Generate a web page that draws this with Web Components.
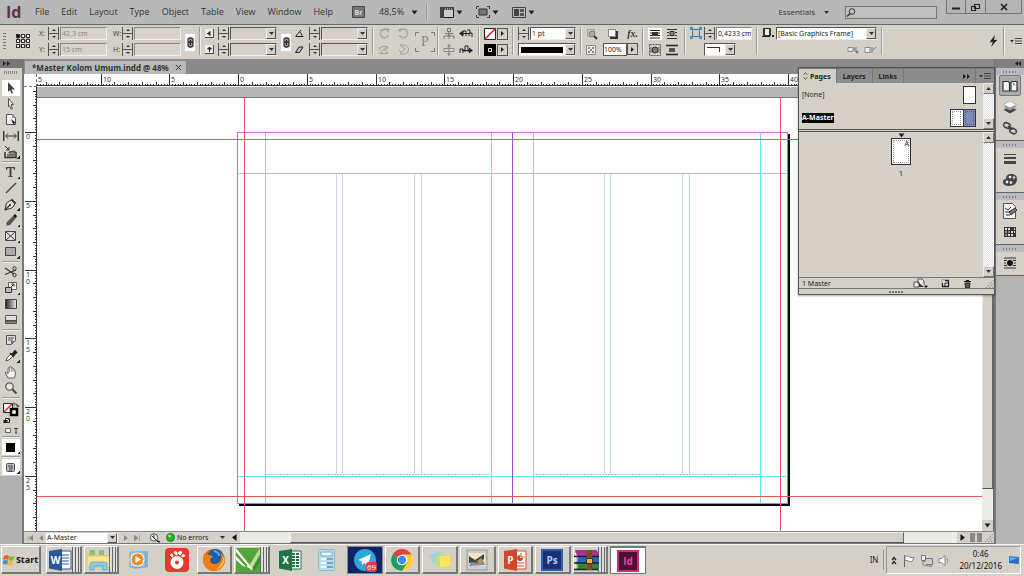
<!DOCTYPE html>
<html lang="en">
<head>
<meta charset="utf-8">
<title>Master Kolom Umum.indd</title>
<style>
html,body{height:100%;margin:0}
body{font-family:"Noto Sans","Open Sans",sans-serif;font-size:7px;color:#222;overflow:hidden;background:#b8b8b8}
</style>
</head>
<body>
<design-app></design-app>
<script>
const RESET = `
*{box-sizing:border-box}
button,input,select{font:inherit;color:inherit;margin:0;padding:0;border:0;border-radius:0;background:none;min-width:0;outline-offset:-1px}
button{display:flex;align-items:center;justify-content:center}
select{appearance:none}
`;
function define(tag, css, markup, ready) {
  customElements.define(tag, class extends HTMLElement {
    connectedCallback() {
      if (this.shadowRoot) return;
      const root = this.attachShadow({ mode: "open" });
      const html = typeof markup === "function" ? markup(this) : markup;
      root.innerHTML = `<style>${RESET}${css}</style>${html}`;
      if (ready) ready(root, this);
    }
  });
}

/* name: [width, height, drawing] */
const ICONS = {
  refpoint: [16, 16, [1, 6, 11].map(y => [1, 6, 11].map(x => `<rect x="${x + .5}" y="${y + .5}" width="3" height="3" fill="${x + y === 2 ? "#111" : "#eee"}" stroke="#333"/>`).join("")).join("") + '<path d="M5 3h1M10 3h1M5 8h1M10 8h1M5 13h1M10 13h1M3 5v1M8 5v1M13 5v1" stroke="#333"/>'],
  chain: [10, 17, '<path d="M0 0h10v17H0z" fill="#fff"/><rect x="3" y="4" width="5" height="5" rx="2" fill="#999" stroke="#333" stroke-width="1.3"/><rect x="3" y="8" width="5" height="5" rx="2" fill="#999" stroke="#333" stroke-width="1.3"/><path d="M5.500 6v5" stroke="#222"/>'],
  scalex: [9, 9, '<path d="M0 0h9v9H0z" fill="#eee"/><path d="M0 8.500h8.500V0" fill="none" stroke="#444"/><path d="M2 4.500h3M5 2.500v4l-2-2z" fill="#222" stroke="#222"/>'],
  scaley: [9, 9, '<path d="M0 0h9v9H0z" fill="#eee"/><path d="M0 8.500h8.500V0" fill="none" stroke="#444"/><path d="M4.500 3v4M2.500 4h4l-2-2z" fill="#222" stroke="#222"/>'],
  angle: [9, 9, '<path d="M.5 7.500h8M1 7l5-6M5 3q2 2 2 4" fill="none" stroke="#222"/>'],
  shear: [9, 9, '<path d="M.5 7.500h4L8 2H4z" fill="#bbb" stroke="#222"/>'],
  rotr: [11, 11, '<path d="M9.500 7A4.200 4.200 0 1 1 8 2" fill="none" stroke="#a8a49c" stroke-width="1.500"/><path d="M7 0l4 1-2 4z" fill="#a8a49c"/>'],
  rotl: [11, 11, '<path d="M1.500 7A4.200 4.200 0 1 0 3 2" fill="none" stroke="#a8a49c" stroke-width="1.500"/><path d="M4 0L0 1l2 4z" fill="#a8a49c"/>'],
  fliph: [12, 11, '<path d="M1 6a5 4 0 0 1 9-2M2 9.500h8L6 5zM9 2v3H6" fill="none" stroke="#a09c94"/>'],
  flipv: [11, 11, '<path d="M2 1h4a4 4 0 0 1 0 9H2l5-5zM1 6l2 2" fill="none" stroke="#a09c94"/>'],
  brackets: [20, 20, '<path d="M4 .5H.5V4M16 .5h3.500V4M4 19.500H.5V16M16 19.500h3.500V16" fill="none" stroke="#777"/>'],
  selcont: [12, 12, '<path d="M4.500.5h3v3h-3zM1 11V8h10v3M6 4v4M2 5.500h8M6 8v3" fill="none" stroke="#777"/><path d="M4 8l2-2 2 2z" fill="#777"/>'],
  selobj: [12, 12, '<path d="M1 4.500h10v3H1zM6 0v12" fill="none" stroke="#888"/><path d="M4 9h4l-2 3zM4 3h4L6 0z" fill="#888"/>'],
  prevobj: [14, 11, '<path d="M1 5.500h9M4 8V3h3v5M8 2h3v4M10 8V5h3v4" fill="none" stroke="#222"/><path d="M0 5.500l4-3v6z" fill="#222"/>'],
  nextobj: [14, 11, '<path d="M3 6.500h9M1 9V5h3v4M6 8V2h3v6" fill="none" stroke="#222"/><path d="M14 6.500l-4-3v6z" fill="#222"/>'],
  nonefill: [12, 12, '<path d="M.5.5h11v11H.5z" fill="#fff" stroke="#222"/><path d="M1 11L11 1" stroke="#d22" stroke-width="1.600"/>'],
  blackstroke: [12, 12, '<path d="M0 0h12v12H0z" fill="#000"/><path d="M4.500 4.500h3v3h-3z" fill="#000" stroke="#eee"/>'],
  play: [5, 5, '<path d="M1 0l3 2.500L1 5z" fill="#222"/>'],
  back: [5, 7, '<path d="M4.500 0v7L0 3.500z" fill="#111"/>'],
  fwd: [5, 7, '<path d="M.5 0v7L5 3.500z" fill="#111"/>'],
  first: [6, 6, '<path d="M1 0v6M6 0v6L2 3z" fill="#888" stroke="#888" stroke-width=".6"/>'],
  prev: [4, 6, '<path d="M4 0v6L0 3z" fill="#888"/>'],
  next: [4, 6, '<path d="M0 0v6l4-3z" fill="#888"/>'],
  last: [6, 6, '<path d="M5.500 0v6M0 0v6l4-3z" fill="#888" stroke="#888" stroke-width=".6"/>'],
  caret: [7, 5, '<path d="M.5.5h6L3.500 4.500z" fill="#222"/>'],
  smallcaret: [5, 3, '<path d="M0 0h5L2.500 3z" fill="#333"/>'],
  effects: [12, 12, '<path d="M1.500 1.500h7v7h-7z" fill="none" stroke="#777" stroke-dasharray="1 1"/><circle cx="6" cy="6" r="3" fill="#aaa" stroke="#777"/><path d="M8 8l3 3" stroke="#333" stroke-width="2"/>'],
  shadow: [10, 10, '<path d="M2 2h8v8H2z" fill="#333"/><path d="M.5.5h7v7h-7z" fill="#f5f5f5" stroke="#888"/>'],
  opacity: [10, 10, '<path d="M.5.5h9v9h-9z" fill="#eee" stroke="#888"/><path d="M2 2h2v2H2zM6 2h2v2H6zM4 4h2v2H4zM2 6h2v2H2zM6 6h2v2H6z" fill="#888"/>'],
  nowrap: [14, 12, '<path d="M0 0h14v12H0z" fill="#fff"/><path d="M2 2.500h10M2 5h10M2 7.500h10M2 10h10" stroke="#222"/><path d="M4 4h6v4H4z" fill="#333"/>'],
  wrapbox: [12, 12, '<path d="M1 1.500h10M1 4.500h2M1 7.500h2M9 4.500h2M9 7.500h2M1 10.500h10" stroke="#333"/><path d="M4 3.500h4v4H4z" fill="#888" stroke="#333"/>'],
  wrapshape: [12, 12, '<path d="M.5.5h11v11H.5z" fill="none" stroke="#555" stroke-dasharray="2 1"/><circle cx="6" cy="6" r="3" fill="#777" stroke="#333"/><path d="M1 4h2M1 6h2M1 8h2M9 4h2M9 6h2M9 8h2" stroke="#555"/>'],
  wrapjump: [12, 12, '<path d="M0 1.500h12M0 10.500h12" stroke="#222" stroke-width="1.500"/><path d="M3 4h6v4H3z" fill="#555"/>'],
  corner: [12, 12, '<path d="M2.500 2.500h7v7h-7z" fill="#ccc" stroke="#666"/><path d="M0 0h3v3H0zM9 0h3v3H9zM0 9h3v3H0zM9 9h3v3H9z" fill="#3a9ad9"/>'],
  objstyle: [12, 11, '<path d="M1 1h8v8H1z" fill="#333"/><path d="M3 2h4v6H3z" fill="#eee"/><path d="M0 9.500h8" stroke="#222"/><path d="M10 8h2v2h-2z" fill="#222"/>'],
  clear1: [12, 8, '<path d="M1 1.500h5v4H1z" fill="#eee" stroke="#888"/><path d="M7 5V2h3M9 3v3" stroke="#777" fill="none"/><path d="M8 5h4l-2 3z" fill="#777"/>'],
  clear2: [13, 8, '<path d="M1 1.500h5v5H1z" fill="#eee" stroke="#888"/><path d="M8 1v6M9 4l3-3" stroke="#777"/>'],
  bolt: [9, 12, '<path d="M6 0L1 6.500h3L2 12l6-7H5z" fill="#222"/><path d="M1 7l7-2" stroke="#222"/>'],
  menu: [12, 8, '<path d="M0 3h4L2 5.500z" fill="#333"/><path d="M5 1.500h7M5 4h7M5 6.500h7" stroke="#444"/>'],
  bridge: [13, 12, '<path d="M.5.5h12v11H.5z" fill="#777" stroke="#444"/>'],
  viewopts: [14, 11, '<path d="M.5.5h13v10H.5z" fill="#ccc" stroke="#222"/><path d="M0 0h14v3H0zM0 0h4v11H0z" fill="#444"/><path d="M5 2h8" stroke="#ddd" stroke-dasharray="1 1"/>'],
  screenmode: [14, 12, '<path d="M3 3h8v6H3z" fill="#777" stroke="#333"/><path d="M.5 3V.5H3M11 .5h2.500V3M.5 9v2.500H3M13.500 9v2.500H11" fill="none" stroke="#333"/>'],
  arrange: [14, 11, '<path d="M.5.5h13v10H.5z" fill="#bbb" stroke="#444"/><path d="M2 2h5v7H2z" fill="#444"/><path d="M8 2h4v3H8zM8 6h4v3H8z" fill="#555"/>'],
  search: [10, 9, '<circle cx="6" cy="3.500" r="2.800" fill="none" stroke="#333"/><path d="M4 5.500L1 8.500" stroke="#333" stroke-width="1.500"/>'],
  min: [8, 8, '<path d="M0 5.500h8" stroke="#222" stroke-width="2"/>'],
  restore: [9, 8, '<path d="M3.500 1.500h5v4h-5zM.5 3.500h4v4h-4z" fill="#b8b8b8" stroke="#222" stroke-width="1.200"/>'],
  close: [8, 8, '<path d="M1 1l6 6M7 1L1 7" stroke="#222" stroke-width="1.700"/>'],
  tabx: [5, 5, '<path d="M0 0l5 5M5 0L0 5" stroke="#333"/>'],
  dbl: [7, 5, '<path d="M0 0l3 2.500L0 5zM4 0l3 2.500L4 5z" fill="#222"/>'],
  dblL: [6, 5, '<path d="M3 0v5L0 2.500zM6 0v5L3 2.500z" fill="#222"/>'],
  updown: [5, 8, '<path d="M.5 3l2-2.500 2 2.500M.5 5l2 2.500 2-2.500" fill="none" stroke="#444" stroke-width=".8"/>'],
  /* toolbox */
  select: [14, 14, '<path d="M4 1l7 7.500H7.500L9 12l-1.500.8L6 9l-2 2z" fill="#444"/>'],
  direct: [14, 14, '<path d="M4.500 1.500l5 6H7l1.500 4-1.500.6L5.500 8.500l-1 1z" fill="#eee" stroke="#444" stroke-width=".9"/>'],
  page: [14, 14, '<path d="M2.500 1.500h6l3 3v7h-9z" fill="#eee" stroke="#555"/><path d="M8 1v4h4z" fill="#999"/><path d="M7 6l5 4-2 .3 1 2.200-2-1.500z" fill="#222"/>'],
  gap: [16, 12, '<path d="M.7 1v10M15.300 1v10" stroke="#333" stroke-width="1.400"/><path d="M3 6h10M5 3.500L2.500 6 5 8.500M11 3.500L13.500 6 11 8.500" fill="none" stroke="#333"/>'],
  collect: [14, 14, '<path d="M1 7v5.500h11V7" fill="none" stroke="#333" stroke-width="1.500"/><path d="M3 9h8v3H3z" fill="#777"/><path d="M5 7l6-1v2H5zM1 1l4 4M5 2v3H2" fill="none" stroke="#333"/>'],
  type: [14, 14, '<path d="M2 5V2h9v3h-.8q-.3-2-2-2H7.500v8l1.500.5v.5H4v-.5l1.500-.5V3H4.800Q3 3 2.800 5z" fill="#444"/>'],
  line: [14, 14, '<path d="M2 12L12 2" stroke="#444" stroke-width="1.400"/>'],
  pen: [14, 14, '<path d="M1 13l1.500-7L7 3l4 4-3 4z" fill="#ddd" stroke="#333"/><path d="M1 13l5-5M7.500 2l4.500 4.500" stroke="#333" stroke-width="1.200"/><circle cx="6" cy="8" r="1" fill="#333"/>'],
  pencil: [14, 14, '<path d="M1 13l2-4 6-6 3 2-6 7z" fill="#555"/><path d="M9 3l2-2 2 2-1 2z" fill="#111"/><path d="M1 13l1-2 1 1z" fill="#fff"/>'],
  frame: [14, 14, '<path d="M1.500 2.500h10v9h-10zM2 3l9 8M11 3l-9 8" fill="#ddd" stroke="#444"/>'],
  rect: [14, 14, '<path d="M1.500 2.500h10v8h-10z" fill="#aaa" stroke="#444"/>'],
  scissors: [14, 14, '<path d="M1 3l9 6M1 9.500l11-4.500" stroke="#333" stroke-width="1.200"/><circle cx="10.500" cy="3.500" r="1.700" fill="none" stroke="#333"/><circle cx="10.500" cy="10" r="1.700" fill="none" stroke="#333"/>'],
  transform: [14, 14, '<path d="M4.500 1.500h8v7h-8z" fill="#eee" stroke="#666"/><path d="M1.500 6.500h6v5h-6z" fill="#bbb" stroke="#333"/><path d="M6 7l4-4M7.500 3H10v2.500" stroke="#333" fill="none"/>'],
  gradient: [14, 14, '<defs><linearGradient id="g"><stop stop-color="#222"/><stop offset="1" stop-color="#eee"/></linearGradient></defs><path d="M1.500 2.500h11v9h-11z" fill="url(#g)" stroke="#444"/>'],
  feather: [14, 14, '<defs><linearGradient id="g" x2="0" y2="1"><stop stop-color="#ddd"/><stop offset=".5" stop-color="#ddd"/><stop offset=".6" stop-color="#444"/><stop offset="1" stop-color="#999"/></linearGradient></defs><path d="M1.500 2.500h11v8h-11z" fill="url(#g)" stroke="#555"/>'],
  note: [14, 14, '<path d="M2.500 2.500h9v5l-4 4h-5z" fill="#ddd" stroke="#555"/><path d="M4 5h6M4 7h5" stroke="#555"/><path d="M7 11.500V8h4z" fill="#777"/>'],
  dropper: [14, 14, '<path d="M2 12l1-3 4-4 2 2-4 4z" fill="#eee" stroke="#444" stroke-width=".9"/><path d="M6 4l4 4M8 5.500l3-3.500 1.500 1.500-3 3z" stroke="#222" stroke-width="1.600"/>'],
  hand: [14, 14, '<path d="M4 13L1 7.500l1-.7L4 9V3.500q.8-1 1.500 0V2q.9-1 1.800 0v1q.9-.8 1.700.2V4q1-.6 1.600.5L11.500 8l-1 5z" fill="#f4f4f4" stroke="#555" stroke-width=".9"/><path d="M5.500 3.500V7M7.300 3v4M9 4v3" stroke="#777" stroke-width=".8"/>'],
  zoom: [14, 14, '<circle cx="5.500" cy="5.500" r="3.700" fill="#e4e4e4" stroke="#555" stroke-width="1.200"/><path d="M8.500 8.500l4 4" stroke="#444" stroke-width="2"/>'],
  fillstroke: [18, 25, '<path d="M1.500 2.500h9v9h-9z" fill="#fff" stroke="#222"/><path d="M2 11l8-8" stroke="#d22" stroke-width="1.500"/><path d="M9 8h6v6H9z" fill="#fff" stroke="#000" stroke-width="2.500"/><path d="M13 3q3 0 3 3M12 1.500v3M14.500 5h3" fill="none" stroke="#333"/><path d="M3.500 17.500h4v4h-4z" fill="#fff" stroke="#222"/><path d="M1.500 19h4v3h-4z" fill="#111"/><path d="M4 21l3-3" stroke="#d22"/>'],
  fmt: [16, 7, '<path d="M2.500 1.500h5v4h-5z" fill="#eee" stroke="#666"/><path d="M11 1.500h4M13 1.500V6M12 6h2" stroke="#444"/>'],
  black: [14, 14, '<path d="M2 3h9v9H2z" fill="#000"/>'],
  preview: [14, 14, '<rect x="2.500" y="3.500" width="8" height="8" rx="1" fill="#bbb" stroke="#555"/><path d="M4 6h5M5 8h4M5 10h3" stroke="#444"/>'],
  /* docked panels */
  dpages: [16, 14, '<path d="M1 2.500h5l1.500 1V12H1zM9 12V3.500L10.500 2.500H15V12z" fill="#f4f4f4" stroke="#333" stroke-width="1.200"/><path d="M11 3v4l2-1.500L15 7" fill="#999"/>'],
  dlayers: [16, 14, '<path d="M8 6.500l6.500 3.300L8 13.500 1.500 9.800z" fill="#444"/><path d="M8 4l6.500 3.300L8 10.500 1.500 7.300z" fill="#999"/><path d="M8 1l6.500 3.500L8 8 1.500 4.500z" fill="#fff" stroke="#888" stroke-width=".6"/>'],
  dlinks: [16, 14, '<ellipse cx="5" cy="4.500" rx="3.500" ry="2.500" transform="rotate(25 5 4.500)" fill="none" stroke="#444" stroke-width="1.500"/><ellipse cx="11" cy="10" rx="3.500" ry="2.500" transform="rotate(25 11 10)" fill="none" stroke="#444" stroke-width="1.500"/><path d="M6 5l4 4" stroke="#333" stroke-width="1.600"/>'],
  dstroke: [16, 14, '<path d="M2 2.500h12" stroke="#444"/><path d="M2 6h12" stroke="#444" stroke-width="2"/><path d="M2 10.500h12" stroke="#444" stroke-width="3"/>'],
  dcolor: [16, 14, '<path d="M9 1q6 0 6 5 0 7-8 7-6 0-6-4 0-3 3-3 0-5 5-5z" fill="#444"/><circle cx="8" cy="4" r="1.300" fill="#fff"/><circle cx="12" cy="4.500" r="1.300" fill="#ccc"/><circle cx="5" cy="9" r="1.400" fill="#eee"/><circle cx="9" cy="9.500" r="1.400" fill="#ddd"/>'],
  dstyle: [16, 16, '<path d="M1.500.5h9l3 3v12h-12z" fill="#f4f4f4" stroke="#555"/><path d="M3 5l3 2 3-3M3 9h5M4 12h4" stroke="#333" fill="none"/><path d="M7 9l6-4 2 2-6 5z" fill="#777" stroke="#333"/>'],
  dswatch: [16, 14, '<path d="M2 2h12v10H2z" fill="#333"/><path d="M3 3h2v2H3zM6 3h2v2H6zM12 3h1v2h-1zM9 6h2v2H9zM12 6h1v2h-1zM6 9h2v2H6zM9 9h2v2H9z" fill="#ddd"/><path d="M3 6h2v2H3zM6 6h2v2H6zM3 9h2v2H3z" fill="#888"/>'],
  dwrap: [16, 14, '<path d="M2 2h12M2 4.500h3M2 7h2M2 9.500h3M11 4.500h3M12 7h2M11 9.500h3M2 12h12" stroke="#333"/><circle cx="8" cy="7" r="3" fill="#111"/>'],
  newspread: [15, 10, '<path d="M1 9V4h5v5zM5 6V1h4l2 2v4" fill="#eee" stroke="#555"/><path d="M6 5l5 4H6z" fill="#333"/><path d="M12 8h2v1h-2z" fill="#111" stroke="#111"/>'],
  newpage: [9, 9, '<path d="M1.500 1.500h6v6h-6z" fill="#eee" stroke="#222" stroke-width="1.300"/><path d="M1 1h3v3H1z" fill="#d4d0c8"/><path d="M4 8V4h3" stroke="#222" fill="none"/>'],
  trash: [9, 9, '<path d="M1 2.500h7M3 1.500h3" stroke="#111"/><path d="M2 4h5l-.6 5H2.600z" fill="#555" stroke="#222"/>'],
  grip: [9, 9, '<path d="M1 9l8-8M4 9l5-5M7 9l2-2" stroke="#888" stroke-dasharray="1.500 1"/>'],
  preflight: [12, 10, '<circle cx="5" cy="4.500" r="3.700" fill="#eee" stroke="#555"/><path d="M3 3l5 5M5 2v3" stroke="#333"/><path d="M8 8l3 1" stroke="#222" stroke-width="1.400"/>'],
  green: [9, 9, '<circle cx="4.500" cy="4.500" r="4" fill="#25b51d" stroke="#2a7f22"/><circle cx="3.500" cy="3" r="1.500" fill="#8fe58a"/>'],
  /* taskbar */
  winflag: [12, 12, '<path d="M1 2q3-2 5 0L5 6Q3 4.500 0 6z" fill="#e8602c"/><path d="M6.500 2q2.500 1.500 5 0l-1 4q-2.500 1.500-5 0z" fill="#7db928"/><path d="M0 6.700q3-1.500 5 0l-1 4q-2-1.500-5 0z" fill="#3a8fd8"/><path d="M5.300 7q2.500 1.500 5 0l-1 4q-2.500 1.500-5 0z" fill="#f6bd25"/>'],
  word: [24, 24, '<path d="M12 3h11v18H12z" fill="#fff" stroke="#2b579a"/><path d="M14 7h7M14 10h7M14 13h7M14 16h7" stroke="#2b579a"/><path d="M1 3l13-2v22L1 20.500z" fill="#2b579a"/><text x="7.500" y="15.500" text-anchor="middle" font-size="10" font-weight="700" fill="#fff">W</text>'],
  folder: [24, 24, '<path d="M1 5h8l1 2h13v13H1z" fill="#ecc766"/><path d="M4 2h5v5H4zM13 2h5v5h-5z" fill="#8fbf70"/><path d="M1 8h22v11H1z" fill="#fbe49a" stroke="#dcb95c" stroke-width=".7"/><path d="M4 22v-6q0-2 2-2h13q2 0 2 2v6h-4v-4H8v4z" fill="#8ccbe6" stroke="#4e9fc6" stroke-width=".7"/>'],
  player: [22, 22, '<path d="M5 3l15-1v16L6 20z" fill="#7cb7d8"/><path d="M2 3h15v15H2z" fill="#a5d1e8" stroke="#6ea8c6"/><circle cx="9.500" cy="10.500" r="6.500" fill="#f28a1c" stroke="#fff"/><path d="M7.500 7v7l5.500-3.500z" fill="#fff"/>'],
  gom: [24, 24, '<rect width="24" height="24" rx="4" fill="#e63a2b"/><circle cx="12" cy="14.500" r="6.500" fill="#fff"/><circle cx="12" cy="14.500" r="2" fill="#e63a2b"/><path d="M5 7q1-2 3 0l-1 2zM9 4q2-2 3 1v2l-2-1zM13 5q1-3 4-1l-2 3zM17 7q3-1 3 1l-3 1z" fill="#fff" stroke="#fff"/>'],
  firefox: [24, 24, '<circle cx="12" cy="12" r="11" fill="#e66000"/><circle cx="13.500" cy="9" r="8" fill="#1c5fa8"/><path d="M12 3q5 1 5 5" stroke="#57a8dc" stroke-width="2" fill="none"/><path d="M2 5q2 2 5 2 3 0 4 2l-3 2q0 5 5 5 4 0 6-4 1-5-1-8 5 4 5 9-1 8-10 10Q3 22 1 13q0-5 1-8z" fill="#f07f13"/><path d="M22 8q2 11-9 14 7-4 9-14z" fill="#ffcb2d"/>'],
  corel: [24, 24, '<path d="M0 0h24v24H0z" fill="#53a536"/><path d="M0 0l16 20-3-1L0 4M0 8l10 11-3-1L0 12" fill="#fff"/><path d="M24 0L13 18l2 5L24 6z" fill="#b9df9b"/><path d="M24 8l-7 11 1 4 6-9z" fill="#3e8d27"/><path d="M12 15l5 7-6-3z" fill="#fff"/>'],
  excel: [24, 24, '<path d="M12 3h11v18H12z" fill="#fff" stroke="#217346"/><path d="M14 6h3M14 9h3M14 12h3M14 15h3M14 18h3M18 6h3M18 9h3M18 12h3M18 15h3M18 18h3" stroke="#217346" stroke-width="2"/><path d="M1 3l13-2v22L1 20.500z" fill="#217346"/><text x="7.500" y="15.500" text-anchor="middle" font-size="10" font-weight="700" fill="#fff">X</text>'],
  calc: [20, 24, '<rect x="1.500" y="1.500" width="16" height="21" rx="1" fill="#b8dbee" stroke="#88b8d2"/><path d="M4 4h11v4H4z" fill="#e9f6fd" stroke="#79a9c4"/><path d="M4 10h5v2H4zM4 14h5v2H4zM4 18h5v2H4z" fill="#fff"/><path d="M10 10h6v2h-6zM10 14h6v2h-6zM10 18h6v2h-6z" fill="#6aa7cd"/>'],
  telegram: [28, 24, '<circle cx="14" cy="12" r="11" fill="#2fa5dc"/><path d="M7 12l13-6-3 12-4-3-2 2-.5-4z" fill="#fff"/><rect x="15" y="14" width="11" height="10" rx="3" fill="#e03c3c"/><text x="20.500" y="22" text-anchor="middle" font-size="8" fill="#fff">69</text>'],
  chrome: [24, 24, '<circle cx="12" cy="12" r="11" fill="#fff"/><path d="M12 12L2.500 6.500A11 11 0 0 1 21.500 6.500z" fill="#dc4437"/><path d="M12 12V6.500h9.500A11 11 0 0 1 12 23z" fill="#fc3"/><path d="M12 12l5 3-5 8A11 11 0 0 1 2.500 6.500z" fill="#1a9f5b"/><circle cx="12" cy="12" r="5.300" fill="#fff"/><circle cx="12" cy="12" r="4.200" fill="#4688f1"/>'],
  notes: [24, 22, '<path d="M1 6l11-4 3 9-10 4z" fill="#9ad5e5"/><path d="M5 11l8-8 7 7-9 8z" fill="#b5df8d"/><path d="M11 7l11-1 1 11-11 2z" fill="#fbe666" stroke="#e6cc4b" stroke-width=".5"/>'],
  photo: [22, 22, '<rect x="1" y="1" width="20" height="20" fill="#ccc" stroke="#999"/><path d="M3 4h16v13H3z" fill="#f4e6c4"/><path d="M3 7l6 4 9-6v5l-6 4H3z" fill="#444"/><path d="M5 13l8 1 4-3 2 5-16 1z" fill="#7a8ea6"/><path d="M11 12l4-3 2 3-4 3z" fill="#d28b3f"/>'],
  ppt: [24, 24, '<path d="M12 3h11v18H12z" fill="#fff" stroke="#d24726"/><path d="M14 15h7M14 18h7" stroke="#d24726"/><path d="M17 7a3 3 0 1 0 3 3h-3z" fill="#d24726"/><path d="M18 5v4h3.500" fill="none" stroke="#d24726"/><path d="M1 3l13-2v22L1 20.500z" fill="#d24726"/><text x="7.500" y="15.500" text-anchor="middle" font-size="10" font-weight="700" fill="#fff">P</text>'],
  ps: [22, 22, '<path d="M1 1h20v20H1z" fill="#1c2f73" stroke="#2f5db5" stroke-width="2"/><text x="11" y="14.500" text-anchor="middle" font-size="10" font-weight="700" fill="#a9d3f5">Ps</text>'],
  rar: [26, 22, '<path d="M1 1h21l3 3v4H3z" fill="#a3358c"/><path d="M1 4l2 4v-2z" fill="#eee"/><path d="M2 8h23v6H3z" fill="#2e62c0"/><path d="M2 14h23v7H3z" fill="#2c8a3a"/><path d="M0 7.500h25M0 14h25M0 20.500h24" stroke="#222" stroke-width="1.500"/><path d="M0 9h4M0 11h4M0 16h4M0 18h4" stroke="#eee"/><path d="M13 1h5v20h-5z" fill="#7d4a1a"/><path d="M12.500 9.500h6v5h-6z" fill="#d9b44a" stroke="#4b2c0c"/>'],
  indd: [22, 22, '<path d="M1 1h20v20H1z" fill="#4b0f32" stroke="#c3307d" stroke-width="2"/><text x="11" y="14.500" text-anchor="middle" font-size="10" font-weight="700" fill="#e64a9a">Id</text>'],
  chev: [6, 9, '<path d="M1 4l2-2.500L5 4M1 8l2-2.500L5 8" fill="none" stroke="#222" stroke-width="1.300"/>'],
  flag: [13, 13, '<path d="M2.500 1v12" stroke="#666"/><path d="M3 2h4l1 1.500h4l-2 4H6.500L6 6.500H3z" fill="#fff" stroke="#888"/>'],
  net: [13, 13, '<path d="M4.500 4.500h8v6h-8z" fill="#ccc" stroke="#777"/><path d="M1.500 1.500h4v5h-4zM3 7v4h4M6 12h6" fill="#eee" stroke="#777"/>'],
  vol: [12, 13, '<path d="M1 4.500h2.500L7 1.500v10L3.500 8.500H1z" fill="#fff" stroke="#888"/><path d="M9 4q1.800 2.500 0 5" fill="none" stroke="#999"/>'],
  monitor: [12, 12, '<path d="M1 2l10 1v7L1 9z" fill="#2b6fc9"/><path d="M2 3l8 1-8 3z" fill="#6ea8e8"/>'],
};
define("ui-icon", `:host{display:inline-flex;flex:none}svg{display:block;font-family:"Open Sans",sans-serif}`, el => {
  const [w, h, d] = ICONS[el.getAttribute("name")];
  return `<svg width="${w}" height="${h}" viewBox="0 0 ${w} ${h}" aria-hidden="true">${d}</svg>`;
});
const icon = n => `<ui-icon name="${n}"></ui-icon>`;
const button = (n, label, cls = "") => `<button class="${cls}" aria-label="${label}">${icon(n)}</button>`;

define("combo-box", `
:host{display:grid;height:13px;min-width:0}
select,span{grid-area:1/1}
select{width:100%;height:13px;padding-left:1px;background:#fff;border:1px solid #555;border-right-color:#ccc;border-bottom-color:#eee;white-space:nowrap}
span{justify-self:end;align-self:center;width:10px;height:11px;margin-right:1px;background:#d4d0c8;border:1px solid #eee;border-right-color:#555;border-bottom-color:#555;display:grid;place-items:center;pointer-events:none}
:host([muted]) select{background:#d6cec8}
:host([plain]){height:10px}
:host([plain]) select{border:0;height:10px}
:host([plain]) span{height:10px}
`, el => `<select aria-label="${el.getAttribute("label")}"><option>${el.getAttribute("value") || ""}</option></select><span>${icon("smallcaret")}</span>`);

define("spin-buttons", `
:host{display:grid;grid-template-rows:6px 6px;gap:1px;width:11px;background:#555;border-left:1px solid #555;border-right:1px solid #555}
button{background:#d4d0c8}
i{border:2px solid transparent;border-top:0;border-bottom:2px solid #333}
button+button i{border-bottom:0;border-top:2px solid #333}
`, `<button aria-label="Increase"><i></i></button><button aria-label="Decrease"><i></i></button>`);

define("spin-field", `
:host{display:grid;grid-template-columns:var(--label,11px) 12px 1fr;height:13px;align-items:center}
:host([bare]){grid-template-columns:12px 1fr}
input{width:100%;height:13px;padding-left:1px;background:#d8d2ca;border:1px solid #888;border-right-color:#eee;border-bottom-color:#eee;color:#888}
:host([active]) input{background:#fff;color:#222}
label{color:#444;display:flex;padding-left:2px}
:host([icon]) label{padding:0}
`, el => {
  const l = el.getAttribute("label"), ic = el.getAttribute("icon"), v = el.getAttribute("value") || "";
  const lab = el.hasAttribute("bare") ? "" : `<label for="f">${ic ? icon(ic) : l}</label>`;
  const box = el.hasAttribute("combo") ? `<combo-box ${el.hasAttribute("active") ? "" : "muted"} label="${l}" value="${v}"></combo-box>` : `<input id="f" aria-label="${l}" value="${v}">`;
  return lab + `<spin-buttons></spin-buttons>` + box;
});

define("menu-bar", `
:host{display:flex;align-items:center;height:24px;background:#b8b8b8;font-family:"Open Sans",sans-serif;font-size:9px;color:#333}
.logo{font-size:16px;font-weight:700;color:#5d2f4d;width:29px;padding-left:6px;line-height:22px}
nav{display:flex;gap:12px;padding-left:6px}
nav a{color:inherit;text-decoration:none;line-height:24px}
.tools{display:flex;align-items:center;margin-left:19px}
.bridge{display:grid}
.bridge>*{grid-area:1/1;place-self:center;color:#ddd;font-size:7px;font-weight:700}
.zoom{gap:7px;margin-left:14px;line-height:22px}
.sep{width:1px;height:16px;background:#999;border-right:1px solid #ccc;box-sizing:content-box;margin:0 12px 0 8px}
.t{gap:2px;margin-right:13px}
.ws{margin-left:auto;gap:9px;font-size:8px;line-height:22px;height:22px}
.search{display:flex;align-items:center;height:13px;width:92px;border:1px solid #777;margin:0 9px 0 16px;background:#c0c0c0}
.search input{flex:1}
.win{display:flex;align-self:flex-start;margin-right:2px}
.win button{height:14px;width:20px;border:1px solid #777;border-top:0;background:#b4b4b4}
.win button+button{border-left:0}
.win button:last-child{width:36px}
`, `<span class="logo">Id</span><nav>${["File", "Edit", "Layout", "Type", "Object", "Table", "View", "Window", "Help"].map(t => `<a href="#">${t}</a>`).join("")}</nav>
<div class="tools"><button class="bridge" aria-label="Bridge">${icon("bridge")}<span>Br</span></button><button class="zoom">48,5%${icon("caret")}</button><span class="sep"></span>
${["viewopts", "screenmode", "arrange"].map(n => `<button class="t" aria-label="${n}">${icon(n)}${icon("caret")}</button>`).join("")}</div>
<button class="ws">Essentials ${icon("smallcaret")}</button><label class="search">${icon("search")}<input type="search" aria-label="Search"></label>
<div class="win">${button("min", "Minimize")}${button("restore", "Restore")}${button("close", "Close")}</div>`);

define("control-bar", `
:host{display:flex;gap:4px;height:35px;padding:2px 2px 3px 3px;background:#d4d0c8;border-top:1px solid #666;align-items:flex-start}
.g{display:grid;grid-template-rows:13px 13px;gap:3px 4px;align-items:center;flex:none}
.sep{width:2px;height:28px;background:#999;border-right:1px solid #eee;flex:none}
.grip{width:8px;height:17px;margin-top:6px;background:repeating-linear-gradient(#777 0 1px,transparent 1px 3px);background-size:3px 100%;background-repeat:no-repeat}
.ref{width:18px;margin-top:6px;justify-content:flex-start}
.link{width:10px;margin-top:7px}
.w70{width:70px}.w72{width:72px;--label:13px}.w73{width:73px;--label:14px}
.p{display:grid;width:18px;margin-top:5px}
.p>*{grid-area:1/1;place-self:center}
.p span{font:14px "Liberation Serif",serif;color:#888}
.two{grid-template-columns:repeat(2,auto);justify-content:start}
.fly{width:11px;height:12px;border:1px solid #555;background:#d4d0c8}
.stroke{grid-template-columns:58px}
.dash{display:grid}
.dash>*{grid-area:1/1}
.dash i{align-self:center;height:6px;background:#000;margin:0 13px 0 3px}
.fxr{display:flex;align-items:center;justify-content:space-between}
.fx{font:italic 700 10px "Liberation Serif",serif;color:#333}
.pct{display:flex;width:35px;height:13px}
.pct input{flex:1;background:#fff;border:1px solid #555;padding-left:0}
.shape{display:grid;width:32px;margin-left:14px}
.shape>*{grid-area:1/1}
.shape i{align-self:center;width:13px;height:5px;border:1px solid #333;border-left:0;border-bottom:0;margin-left:3px}
.corner{display:grid;grid-template-columns:12px 1fr;gap:2px;width:62px}
.obj{display:grid;grid-template-columns:12px 101px;gap:2px}
.obj2{display:flex;justify-content:flex-end;gap:5px}
.end{margin-left:auto;display:flex;align-items:center;gap:5px;height:28px}
`, `<span class="grip"></span><button class="ref" aria-label="Reference point">${icon("refpoint")}</button>
<div class="g w70"><spin-field label="X:" value="42,3 cm"></spin-field><spin-field label="Y:" value="15 cm"></spin-field></div>
<div class="g w70"><spin-field label="W:"></spin-field><spin-field label="H:"></spin-field></div>
${button("chain", "Constrain proportions", "link")}<span class="sep"></span>
<div class="g w72"><spin-field combo icon="scalex" label="Scale X"></spin-field><spin-field combo icon="scaley" label="Scale Y"></spin-field></div>
${button("chain", "Constrain scale", "link")}
<div class="g w73"><spin-field combo icon="angle" label="Rotation"></spin-field><spin-field combo icon="shear" label="Shear"></spin-field></div>
<span class="sep"></span>
<div class="g two" style="width:33px;column-gap:8px">${button("rotr", "Rotate clockwise")}${button("rotl", "Rotate counterclockwise")}${button("fliph", "Flip horizontal")}${button("flipv", "Flip vertical")}</div>
<div class="p">${icon("brackets")}<span>P</span></div><span class="sep"></span>
<div class="g two" style="width:31px">${button("selcont", "Select container")}${button("prevobj", "Previous object")}${button("selobj", "Select content")}${button("nextobj", "Next object")}</div>
<span class="sep"></span>
<div class="g two" style="width:24px;column-gap:1px">${button("nonefill", "Fill")}${button("play", "Fill menu", "fly")}${button("blackstroke", "Stroke")}${button("play", "Stroke menu", "fly")}</div>
<span class="sep"></span>
<div class="g stroke"><spin-field bare combo active label="Weight" value="1 pt"></spin-field><div class="dash"><combo-box label="Stroke type"></combo-box><i></i></div></div>
<span class="sep"></span>
<div class="g" style="width:52px"><div class="fxr">${button("effects", "Apply effects")}${button("shadow", "Drop shadow")}<button class="fx">fx.</button></div><div class="fxr">${icon("opacity")}<div class="pct"><input aria-label="Opacity" value="100%">${button("play", "Opacity slider", "fly")}</div></div></div>
<span class="sep"></span>
<div class="g two" style="width:32px">${button("nowrap", "No text wrap")}${button("wrapbox", "Wrap around box")}${button("wrapshape", "Wrap around shape")}${button("wrapjump", "Jump object")}</div>
<span class="sep"></span>
<div class="g"><div class="corner">${icon("corner")}<spin-field bare active label="Corner size" value="0,4233 cm"></spin-field></div><div class="shape"><combo-box label="Corner shape"></combo-box><i></i></div></div>
<span class="sep"></span>
<div class="g"><div class="obj">${icon("objstyle")}<combo-box label="Object style" value="[Basic Graphics Frame]"></combo-box></div><div class="obj2">${button("clear1", "Clear overrides")}${button("clear2", "Clear attributes")}</div></div>
<span class="sep"></span>
<div class="end">${button("bolt", "Quick apply")}<span class="sep"></span>${button("menu", "Panel menu")}</div>`);

define("tool-box", `
:host{display:flex;flex-direction:column;width:24px;background:#b0b0b0;border-right:2px solid #777}
header{height:9px;background:#777;display:flex;align-items:center;padding-left:3px}
.body{background:#d4d0c8;padding:2px 2px 1px 2px;display:flex;flex-direction:column}
.grip{height:3px;margin:1px 2px 6px 2px;background:repeating-linear-gradient(90deg,#888 0 1px,transparent 1px 2px)}
button{height:16px;width:18px}
.on{background:#fff}
.fly{background:linear-gradient(135deg,transparent 50%,#222 50%) 15px 12px/3px 3px no-repeat}
.on.fly{background:linear-gradient(135deg,transparent 50%,#222 50%) 15px 12px/3px 3px no-repeat,#fff}
hr{width:18px;margin:1px 0;border:0;border-top:1px solid #999;border-bottom:1px solid #eee}
.fs{height:26px}.fm{height:9px}
`, `<header>${icon("dbl")}</header><div class="body"><div class="grip"></div>
${[["select", "on"], ["direct"], ["page"], ["gap"], ["collect", "fly"], 0, ["type", "fly"], ["line"], ["pen", "fly"], ["pencil", "fly"], ["frame", "fly"], ["rect", "fly"], 0, ["scissors"], ["transform", "fly"], ["gradient"], ["feather"], 0, ["note"], ["dropper", "fly"], ["hand"], ["zoom"], 0, ["fillstroke", "fs"], ["fmt", "fm"], 0, ["black", "on fly"], 0, ["preview", "on fly"]].map(t => t ? button(t[0], t[0], t[1] || "") : "<hr>").join("")}</div>`);

/* Screen pixels per centimetre at the current zoom, and the ruler's zero inside the canvas. */
const CM = 13.75, ZERO_X = 201, ZERO_Y = 45;
define("ruler-strip", `
:host{display:block;overflow:hidden;background:#fff}
svg{display:block;width:100%;height:100%}
path{stroke:#333;fill:none;shape-rendering:crispEdges}
text{font-size:7px;fill:#333}
`, el => {
  const vertical = el.hasAttribute("vertical"), zero = vertical ? ZERO_Y : ZERO_X;
  const from = vertical ? -3 : -15, to = vertical ? 80 : 200, lastLabel = vertical ? 25 : 40;
  let d = "", labels = "";
  for (let i = from * 5; i <= to * 5; i++) {
    const p = Math.round(zero + i * CM / 5) + .5, cm = i / 5;
    const len = i % 25 === 0 ? 12 : i % 5 === 0 ? 4 : 2;
    d += vertical ? `M${13 - len} ${p}h${len}` : `M${p} ${12 - len}v${len}`;
    if (i % 25 === 0 && cm <= lastLabel) {
      const s = String(Math.abs(cm));
      if (vertical) labels += [...s].map((c, k) => `<text x="2" y="${p + 6.500 + k * 7}">${c}</text>`).join("");
      /* A mark left of the strip keeps only its last digit in view. */
      else labels += p < 0 ? `<text x="1" y="8">${s.slice(-1)}</text>` : `<text x="${p + 1.500}" y="8">${s}</text>`;
    }
  }
  d += vertical ? "M12.500 0V2000" : "M0 11.500H3000";
  return `<svg><path d="${d}"/>${labels}</svg>`;
});

define("page-canvas", `
:host{display:block;background:#fff;border-top:10px solid #b8b8b8;overflow:hidden;min-width:0}
svg{display:block;width:100%;height:100%}
path{fill:none;shape-rendering:crispEdges}
`, () => {
  const v = (xs, a, b) => xs.map(x => `M${x}.5 ${a}V${b}`).join(""), h = (ys, a, b) => ys.map(y => `M${a} ${y}.5H${b}`).join("");
  return `<svg role="img" aria-label="Master spread with guides">
<path stroke="#777" d="M0 .5H3000"/>
<path stroke="#050510" stroke-width="2" d="M202 408H753M752 37V409"/>
<path stroke="#c5d7ee" d="${v([299, 305, 377, 384, 567, 573, 645, 652], 77, 377)}"/>
<path stroke="#aebfcf" stroke-dasharray="2 1" d="${h([377], 228, 454)}${h([377], 496, 723)}"/>
<path stroke="#62e6ea" d="${v([228, 454, 496, 723], 36, 406)}${h([76, 379], 201, 751)}"/>
<path stroke="#c66fd6" d="M200.500 35.500H750.500V406.500H200.500z"/>
<path stroke="#9a4fd6" d="${v([475], 36, 406)}"/>
<path stroke="#e05a5a" d="${v([207, 743], 1, 3000)}${h([42, 399], 0, 3000)}"/></svg>`;
});

define("document-window", `
:host{display:grid;grid-template-rows:15px 13px minmax(0,1fr) 13px;grid-template-columns:13px minmax(0,1fr) 12px;background:#8a8a8a;min-width:0}
.tabs{grid-column:1/-1;padding:2px 0 0 1px;display:flex}
.tab{display:flex;align-items:center;gap:7px;background:#b8b8b8;padding:0 5px 0 7px;font-size:8px;font-weight:700;color:#333;white-space:nowrap;line-height:13px}
.corner{background:#fff;border:1px dashed #777;border-width:0 1px 1px 0}
.hr{grid-column:2/-1}
.vs{background:#ecebe7;display:grid;grid-template-rows:1fr 31px 11px;border-right:1px solid #666}
.thumb{background:#d4d0c8;border:1px solid #eee;border-right-color:#666;border-bottom-color:#555}
.vs button{background:#d4d0c8}
footer{grid-column:1/-1;display:flex;align-items:center;background:#d4d0c8;border-top:1px solid #888;border-bottom:1px solid #777;color:#222}
footer button{height:11px}
.nav{width:11px}
combo-box{width:72px;margin-right:2px}
.err{gap:2px;white-space:nowrap}
.pf{margin:0 5px 0 7px}
.dd{margin:0 4px 0 12px}
.sb{flex:1;display:grid;grid-template-columns:50px 611fr 53fr;background:#ecebe7;height:11px}
.split{width:12px;height:9px;margin:0 1px 0 2px;background:linear-gradient(90deg,#888 0 5px,#d4d0c8 5px 7px,#888 7px)}
.a{width:11px}
`, `<div class="tabs"><div class="tab">*Master Kolom Umum.indd @ 48%${button("tabx", "Close tab")}</div></div>
<div class="corner"></div><ruler-strip class="hr"></ruler-strip>
<ruler-strip vertical></ruler-strip><page-canvas></page-canvas>
<div class="vs"><div class="thumb"></div><span></span>${button("caret", "Scroll down")}</div>
<footer>${button("first", "First page", "nav")}${button("prev", "Previous page", "nav")}<combo-box plain label="Page" value="A-Master"></combo-box>${button("next", "Next page", "nav")}${button("last", "Last page", "nav")}${button("preflight", "Preflight", "pf")}<button class="err">${icon("green")}No errors</button>${button("smallcaret", "Preflight menu", "dd")}
${button("back", "Scroll left", "a")}<div class="sb"><span></span><div class="thumb"></div></div>${button("fwd", "Scroll right", "a")}<span class="split"></span>${button("grip", "Resize", "a")}</footer>`);

define("scroll-column", `
:host{display:flex;flex-direction:column;justify-content:space-between;width:11px;background:repeating-conic-gradient(#fff 0 25%,#ddd 0 50%) 0 0/2px 2px}
button{width:11px;height:11px;background:#d4d0c8;border:1px solid #eee;border-right-color:#777;border-bottom-color:#777}
.up ui-icon{transform:rotate(180deg)}
`, `${button("smallcaret", "Scroll up", "up")}${button("smallcaret", "Scroll down")}`);

define("pages-panel", `
:host{display:flex;flex-direction:column;width:197px;background:#d4d0c8;border:1px solid #555;box-shadow:0 1px 2px #0005;color:#222}
.tabs{display:flex;height:15px;background:#8c8c8c;font-weight:700;align-items:stretch;border-top:1px solid #777}
.tabs button{padding:0 6px;gap:2px;border-right:1px solid #777;font-weight:700}
.tabs .on{background:#d4d0c8;padding:0 5px 0 4px}
.tabs .x{margin-left:auto;padding:0 5px 0 0}
.tabs .m{border:0;padding:0 3px}
.masters{display:grid;grid-template-columns:1fr 11px;height:46px}
.row{display:flex;justify-content:space-between;align-items:center;height:22px;padding:0 7px 0 3px}
.row:first-child{height:24px}
.name{font-size:7px;line-height:10px}
.sel .name{background:#000;color:#fff;font-weight:700}
.thumbs{display:flex}
.thumbs i{width:13px;height:18px;background:#fff;border:1px solid #333}
.thumbs .d{outline:1px dotted #99a;outline-offset:-3px;border-right:0}
.thumbs .b{background:#7d8db8;border-color:#335;outline:1px dotted #557;outline-offset:-3px}
.pages{display:grid;grid-template-columns:1fr 11px;height:148px;border-top:3px double #555}
.sheet{display:flex;flex-direction:column;align-items:center;padding:1px 0 0 20px}
.pg{display:grid;width:20px;height:27px;background:#fff;border:1px solid #333;text-align:right;line-height:9px;padding-right:1px;margin-bottom:4px;outline:1px dotted #99a;outline-offset:-3px}
footer{display:flex;align-items:center;height:12px;padding:0 0 0 3px;border-top:1px solid #777;border-bottom:1px solid #777;gap:13px}
footer span{margin-right:auto}
.g{height:5px;background:repeating-linear-gradient(90deg,#777 0 2px,transparent 2px 3px) center/15px 2px no-repeat}
`, `<div class="tabs"><button class="on">${icon("updown")}Pages</button><button>Layers</button><button>Links</button>${button("dbl", "Collapse", "x")}${button("menu", "Panel menu", "m")}</div>
<div class="masters"><div><div class="row"><span class="name">[None]</span><span class="thumbs"><i></i></span></div><div class="row sel"><span class="name">A-Master</span><span class="thumbs"><i class="d"></i><i class="b"></i></span></div></div><scroll-column></scroll-column></div>
<div class="pages"><div class="sheet">${icon("caret")}<div class="pg">A</div><span>1</span></div><scroll-column></scroll-column></div>
<footer><span>1 Master</span>${button("newspread", "Edit page size")}${button("newpage", "New page")}${button("trash", "Delete page")}${icon("grip")}</footer><div class="g"></div>`);

define("icon-dock", `
:host{display:block;width:30px;background:#b4b4b4;border-left:2px solid #777;color:#222}
header{height:9px;background:#808080;display:flex;align-items:center;justify-content:flex-end;padding-right:3px}
section{background:#d4d0c8;border-bottom:1px solid #666;padding-bottom:2px}
.grip{height:7px;background:repeating-linear-gradient(90deg,#777 0 1px,transparent 1px 3px) center/14px 2px no-repeat,#b9bbc0}
button{width:22px;height:21px;margin:0 auto}
.on{background:#aaa;border:1px solid #777;border-radius:2px}
`, `<header>${icon("dblL")}</header>${[["dpages", "dlayers", "dlinks"], ["dstroke", "dcolor"], ["dstyle", "dswatch"], ["dwrap"]].map(g => `<section><div class="grip"></div>${g.map(n => button(n, n, n === "dpages" ? "on" : "")).join("")}</section>`).join("")}`);

define("task-bar", `
:host{display:flex;align-items:center;height:32px;background:#d4d0c8;border-top:1px solid #f4f4f4;padding:0 3px 1px 1px}
.start{width:40px;height:28px;gap:1px;font-size:9px;font-weight:700;color:#111}
.r{border:1px solid #fff;border-right:2px solid #777;border-bottom:2px solid #777}
.apps{display:grid;grid-template-columns:repeat(16,1fr);gap:2px;width:600px;margin-left:5px;height:28px}
.stack{padding-right:6px;background:repeating-linear-gradient(90deg,#666 0 1px,#ddd 1px 3px) right/8px 100% no-repeat}
.navy{background:#0b2466;border:1px solid #888}
.in{background:#fff;border:1px solid #777;border-top-width:2px}
.lang{margin-left:auto;font-size:8px;padding-right:5px;border-right:1px solid #999;line-height:20px}
.tray{display:flex;align-items:center;gap:5px;height:28px;margin-left:2px;padding:0 0 0 4px;border:1px solid #999;border-right-color:#fff;border-bottom-color:#fff}
time{font-size:8px;line-height:12px;text-align:center;margin:0 1px 0 4px;color:#111}
`, `<button class="start r">${icon("winflag")}Start</button><div class="apps">${[["word", "r stack"], ["folder", "r stack"], ["player"], ["gom"], ["firefox", "r"], ["corel", "r stack"], ["excel"], ["calc"], ["telegram", "navy"], ["chrome", "r"], ["notes", "r"], ["photo", "r"], ["ppt", "r"], ["ps", "r"], ["rar", "r stack"], ["indd", "in"]].map(a => button(a[0], a[0], a[1] || "")).join("")}</div>
<span class="lang">IN</span><div class="tray">${icon("chev")}${icon("flag")}${icon("net")}${icon("vol")}<time datetime="2016-12-20T00:46">0:46<br>20/12/2016</time>${icon("monitor")}</div>`);

define("design-app", `
:host{display:grid;grid-template-rows:24px 35px minmax(0,1fr) 32px;height:100%}
main{display:grid;grid-template-columns:24px minmax(0,1fr) 30px;position:relative;min-height:0}
pages-panel{position:absolute;right:29px;top:8px}
`, `<menu-bar></menu-bar><control-bar></control-bar><main><tool-box></tool-box><document-window></document-window><icon-dock></icon-dock><pages-panel></pages-panel></main><task-bar></task-bar>`);
</script>
</body>
</html>
